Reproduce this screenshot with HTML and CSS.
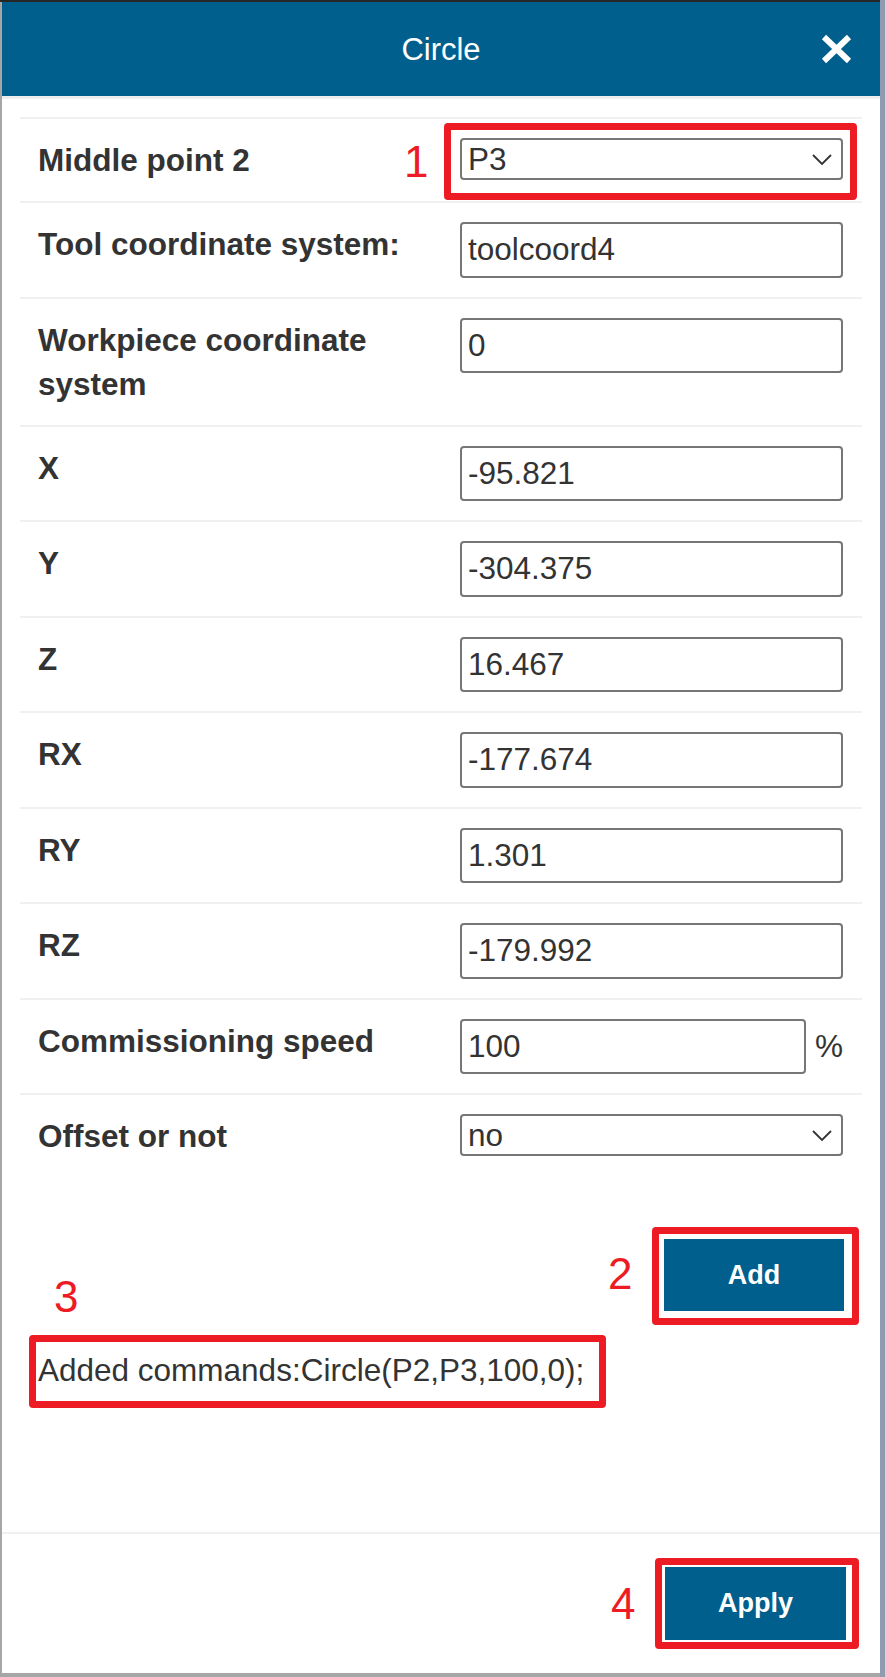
FILE: index.html
```html
<!DOCTYPE html>
<html lang="en">
<head>
<meta charset="utf-8">
<title>Circle</title>
<link rel="stylesheet" href="styles.css">
</head>
<body>
<div class="dialog">
  <header class="dlg-head">
    <span></span>
    <h1 class="dlg-title">Circle</h1>
    <button class="dlg-close" aria-label="Close">
      <svg width="31" height="30" viewBox="0 0 31 30"><path d="M3 3 L28 27 M28 3 L3 27" stroke="#fff" stroke-width="6" fill="none"/></svg>
    </button>
  </header>

  <main class="dlg-body">
    <div class="row">
      <label class="lbl">Middle point 2</label>
      <div class="select"><span>P3</span><svg class="chev" width="20" height="11" viewBox="0 0 20 11"><polyline points="1,1 10,10 19,1" fill="none" stroke="#333" stroke-width="1.8"/></svg></div>
    </div>
    <div class="row">
      <label class="lbl">Tool coordinate system:</label>
      <input class="field" type="text" value="toolcoord4">
    </div>
    <div class="row">
      <label class="lbl">Workpiece coordinate system</label>
      <input class="field" type="text" value="0">
    </div>
    <div class="row">
      <label class="lbl">X</label>
      <input class="field" type="text" value="-95.821">
    </div>
    <div class="row">
      <label class="lbl">Y</label>
      <input class="field" type="text" value="-304.375">
    </div>
    <div class="row">
      <label class="lbl">Z</label>
      <input class="field" type="text" value="16.467">
    </div>
    <div class="row">
      <label class="lbl">RX</label>
      <input class="field" type="text" value="-177.674">
    </div>
    <div class="row">
      <label class="lbl">RY</label>
      <input class="field" type="text" value="1.301">
    </div>
    <div class="row">
      <label class="lbl">RZ</label>
      <input class="field" type="text" value="-179.992">
    </div>
    <div class="row">
      <label class="lbl">Commissioning speed</label>
      <div class="unit-field"><input class="field" type="text" value="100"><span class="unit">%</span></div>
    </div>
    <div class="row">
      <label class="lbl">Offset or not</label>
      <div class="select"><span>no</span><svg class="chev" width="20" height="11" viewBox="0 0 20 11"><polyline points="1,1 10,10 19,1" fill="none" stroke="#333" stroke-width="1.8"/></svg></div>
    </div>

    <div class="actions">
      <button class="btn">Add</button>
    </div>
    <p class="result">Added commands:Circle(P2,P3,100,0);</p>
  </main>

  <footer class="dlg-foot">
    <button class="btn btn-apply">Apply</button>
  </footer>

  <span class="mark-box box1"></span>
  <span class="mark-num num1">1</span>
  <span class="mark-box box2"></span>
  <span class="mark-num num2">2</span>
  <span class="mark-box box3"></span>
  <span class="mark-num num3">3</span>
  <span class="mark-box box4"></span>
  <span class="mark-num num4">4</span>
</div>
</body>
</html>
```

FILE: styles.css
```css
html, body {
  margin: 0;
  padding: 0;
}
body {
  width: 885px;
  height: 1677px;
  overflow: hidden;
  background:
    linear-gradient(to right, transparent 880px, #8e9bb0 880px),
    linear-gradient(to bottom, #262626 0, #262626 2px, #a6a6a6 2px);
  font-family: "Liberation Sans", Arial, sans-serif;
  color: #333;
}
.dialog {
  position: relative;
  margin: 2px 0 0 2px;
  width: 878px;
  height: 1671px;
  background: #fff;
  display: flex;
  flex-direction: column;
}
.dlg-head {
  height: 94px;
  background: #005f8c;
  border-bottom: 3px solid #eeeeee;
  display: grid;
  grid-template-columns: 1fr auto 1fr;
  align-items: center;
}
.dlg-title {
  margin: 0;
  font-size: 31px;
  font-weight: normal;
  color: #fff;
  line-height: 1;
}
.dlg-close {
  justify-self: end;
  margin-right: 28px;
  width: 31px;
  height: 30px;
  padding: 0;
  border: 0;
  background: transparent;
  display: flex;
}
.dlg-body {
  flex: 1;
  padding: 18px 18px 0;
}
.row {
  display: grid;
  grid-template-columns: 1fr 383px;
  column-gap: 20px;
  align-items: start;
  border-top: 2px solid #f0f0f0;
  padding: 19px 19px 19px 18px;
}
.lbl {
  font-size: 31.5px;
  font-weight: bold;
  line-height: 44px;
  color: #333;
}
.field {
  box-sizing: border-box;
  width: 100%;
  height: 55.5px;
  margin: 0;
  border: 2px solid #767676;
  border-radius: 4px;
  padding: 0 6px;
  font-family: "Liberation Sans", Arial, sans-serif;
  font-size: 31.5px;
  color: #333;
  background: #fff;
  outline: none;
}
.select {
  box-sizing: border-box;
  height: 42px;
  border: 2px solid #767676;
  border-radius: 4px;
  padding: 0 9px 0 6px;
  display: flex;
  align-items: center;
  justify-content: space-between;
  font-size: 31.5px;
  color: #333;
}
.chev {
  display: block;
}
.unit-field {
  display: flex;
  align-items: center;
  gap: 9px;
}
.unit-field .field {
  flex: 1;
  width: auto;
  min-width: 0;
}
.unit {
  font-size: 31.5px;
  color: #333;
}
.actions {
  display: flex;
  justify-content: flex-end;
  padding: 62px 18px 0;
}
.btn {
  width: 180px;
  height: 72px;
  border: 0;
  padding: 0;
  background: #005f8c;
  color: #fff;
  font-family: "Liberation Sans", Arial, sans-serif;
  font-size: 27px;
  font-weight: bold;
}
.result {
  margin: 41px 0 0;
  padding-left: 18px;
  font-size: 31.5px;
  line-height: 36px;
  color: #333;
}
.dlg-foot {
  border-top: 2px solid #f0f0f0;
  padding: 33px 34px;
  display: flex;
  justify-content: flex-end;
}
.btn-apply {
  width: 181px;
  height: 73px;
}

/* annotation overlays */
.mark-box {
  position: absolute;
  box-sizing: border-box;
  border: 7px solid #ed1c24;
  border-radius: 4px;
}
.mark-num {
  position: absolute;
  font-size: 44px;
  line-height: 44px;
  color: #ed1c24;
}
.box1 { left: 442px; top: 121px; width: 413px; height: 77px; }
.box2 { left: 650px; top: 1225px; width: 207px; height: 98px; }
.box3 { left: 27px; top: 1333px; width: 577px; height: 73px; }
.box4 { left: 653px; top: 1556px; width: 204px; height: 91px; }
.num1 { left: 402px; top: 138px; }
.num2 { left: 606px; top: 1250px; }
.num3 { left: 52px; top: 1273px; }
.num4 { left: 609px; top: 1580px; }
```
